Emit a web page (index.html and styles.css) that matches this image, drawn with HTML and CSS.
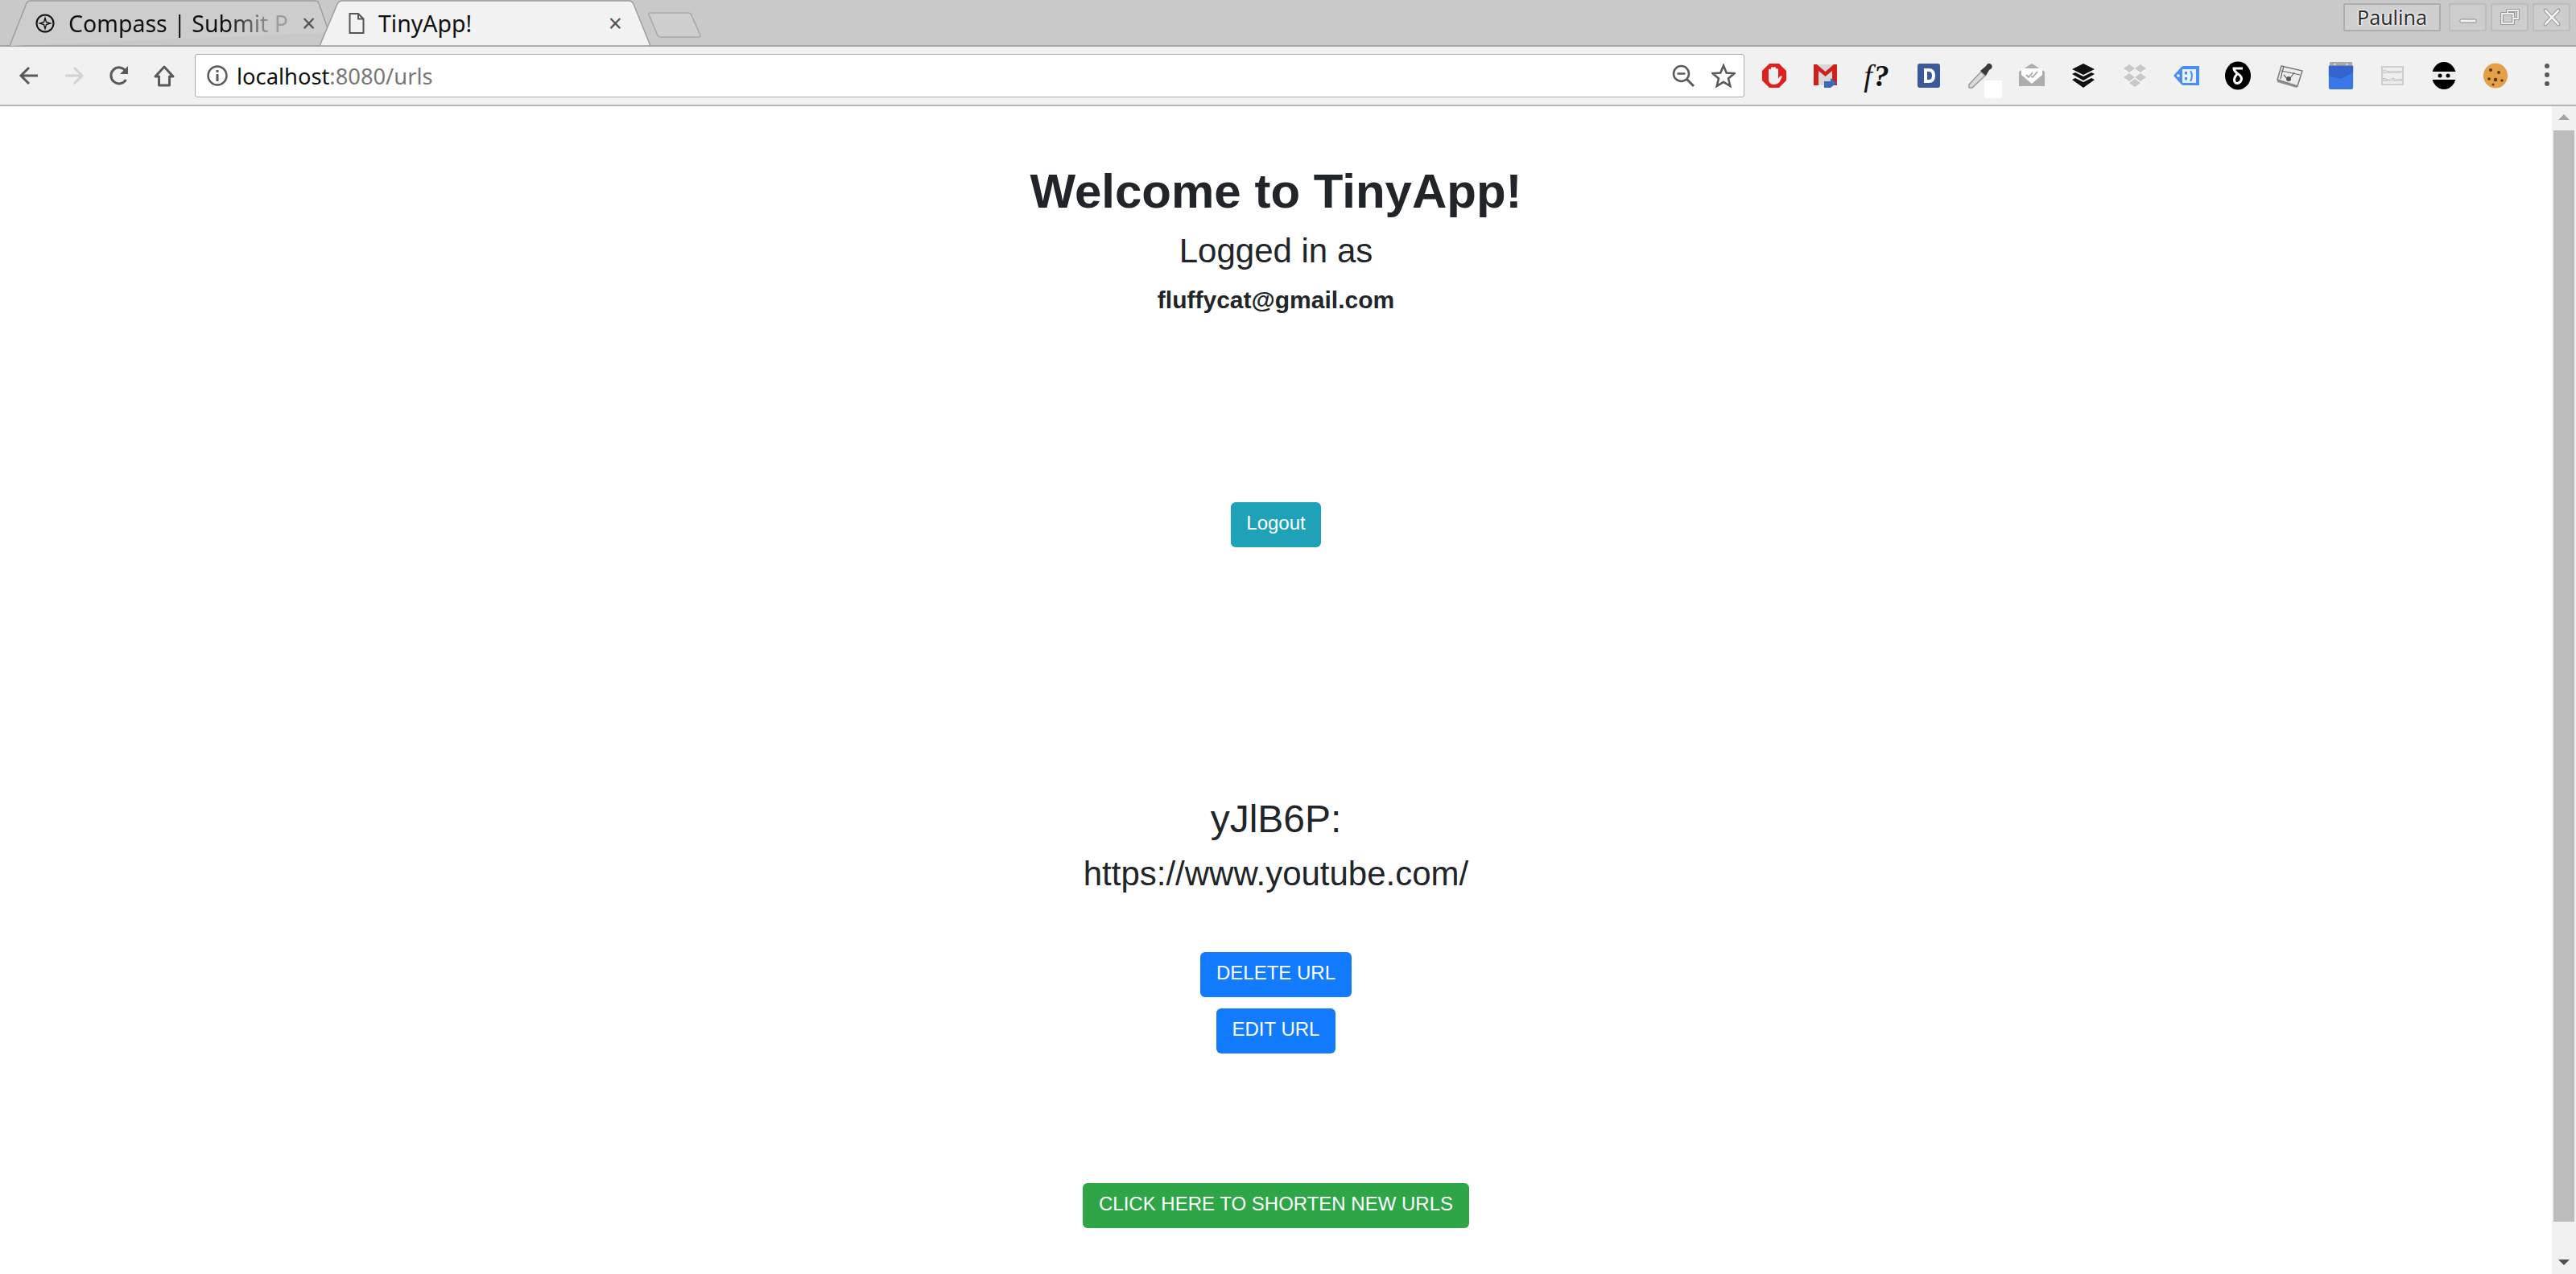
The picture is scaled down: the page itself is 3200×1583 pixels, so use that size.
FILE: index.html
```html
<!DOCTYPE html>
<html lang="en">
<head>
<meta charset="UTF-8">
<title>TinyApp!</title>
<link rel="stylesheet" href="styles.css">
</head>
<body>
<div class="tabstrip">
  <div class="tab">
    <svg class="tab-shape" viewBox="0 0 399 56" preserveAspectRatio="none"><path d="M1 56 L22 4 Q23 1 27 1 L380 1 Q384 1 385 4 L398 40" fill="#cdcdcd" stroke="#9e9e9e" stroke-width="1.5"/></svg>
    <svg class="tab-icon" viewBox="0 0 24 24"><circle cx="12" cy="12" r="10.5" fill="none" stroke="#111" stroke-width="2"/><path d="M12 5.500 L13.500 10.500 L18.500 12 L13.500 13.500 L12 18.500 L10.500 13.500 L5.500 12 L10.500 10.500 Z" fill="none" stroke="#111" stroke-width="1.400"/></svg>
    <span class="tab-title tab-title-fade">Compass | Submit P</span>
    <span class="tab-close">×</span>
  </div>
  <div class="tab tab-active">
    <svg class="tab-shape" viewBox="0 0 412 57" preserveAspectRatio="none"><path d="M0 57 L22 5 Q24 1 28 1 L384 1 Q388 1 390 5 L411 57 Z" fill="#f2f2f2" stroke="#9e9e9e" stroke-width="1.5"/></svg>
    <svg class="tab-icon" viewBox="0 0 20 26"><path d="M1.500 1 H12 L18.500 7.500 V25 H1.500 Z M12 1 V7.500 H18.500" fill="none" stroke="#555" stroke-width="2"/></svg>
    <span class="tab-title">TinyApp!</span>
    <span class="tab-close">×</span>
  </div>
  <svg class="new-tab" viewBox="0 0 68 34"><path d="M2 2 H50 Q53 2 54 5 L65 30 Q66 32 63 32 H15 Q13 32 12 30 L1 4 Q1 2 2 2 Z" fill="#cfcfcf" stroke="#a8a8a8" stroke-width="1.5"/></svg>
  <div class="window-controls">
    <div class="profile">Paulina</div>
    <div class="win-btn"><svg viewBox="0 0 24 24" width="24" height="24"><rect x="2" y="14" width="20" height="4" rx="1.500" fill="#f2f2f2" stroke="#8a8a8a" stroke-width="1"/></svg></div>
    <div class="win-btn"><svg viewBox="0 0 24 24" width="24" height="24"><path d="M9 6 V3 H22 V13 H17 M2 7 H16 V19 H2 Z" fill="none" stroke="#8a8a8a" stroke-width="3.600"/><path d="M9 6 V3 H22 V13 H17 M2 7 H16 V19 H2 Z" fill="none" stroke="#f0f0f0" stroke-width="1.800"/></svg></div>
    <div class="win-btn"><svg viewBox="0 0 24 24" width="24" height="24"><path d="M4 3 L20 20 M20 3 L4 20" stroke="#8a8a8a" stroke-width="4.500" stroke-linecap="round"/><path d="M4 3 L20 20 M20 3 L4 20" stroke="#f4f4f4" stroke-width="2.800" stroke-linecap="round"/></svg></div>
  </div>
</div>

<div class="toolbar">
  <div class="nav-btn"><svg viewBox="0 0 28 28" width="28" height="28"><path d="M25 14 H5 M14 4 L4 14 L14 24" fill="none" stroke="#5a5a5a" stroke-width="3"/></svg></div>
  <div class="nav-btn"><svg viewBox="0 0 28 28" width="28" height="28"><path d="M3 14 H23 M14 4 L24 14 L14 24" fill="none" stroke="#d2d2d2" stroke-width="3"/></svg></div>
  <div class="nav-btn"><svg viewBox="0 0 28 28" width="28" height="28"><path d="M22.500 19 A10 10 0 1 1 22 8" fill="none" stroke="#5a5a5a" stroke-width="3"/><path d="M25 2 V12 H15 Z" fill="#5a5a5a"/></svg></div>
  <div class="nav-btn"><svg viewBox="0 0 28 28" width="28" height="28"><path d="M14 3 L25 15 H20.500 V26 H7.500 V15 H3 Z" fill="none" stroke="#5a5a5a" stroke-width="3" stroke-linejoin="round"/></svg></div>
  <div class="omnibox">
    <svg class="info-icon" viewBox="0 0 26 26" width="26" height="26"><circle cx="13" cy="13" r="11.500" fill="none" stroke="#5a5a5a" stroke-width="2.400"/><rect x="11.500" y="11" width="3" height="9" fill="#5a5a5a"/><rect x="11.500" y="6" width="3" height="3" fill="#5a5a5a"/></svg>
    <span class="url"><span class="url-host">localhost</span>:8080/urls</span>
    <svg class="box-icon" viewBox="0 0 28 28" width="28" height="28"><circle cx="11.500" cy="11.500" r="9.500" fill="none" stroke="#5a5a5a" stroke-width="2.500"/><path d="M6.500 11.500 H16.500" stroke="#5a5a5a" stroke-width="2.500"/><path d="M18 18 L27 27" stroke="#5a5a5a" stroke-width="3"/></svg>
    <svg class="box-icon" viewBox="0 0 30 30" width="30" height="30"><path d="M15 2.500 L18.700 11.500 L28.500 12.200 L21 18.500 L23.300 28 L15 22.900 L6.700 28 L9 18.500 L1.500 12.200 L11.300 11.500 Z" fill="none" stroke="#5a5a5a" stroke-width="2.600"/></svg>
  </div>
  <div class="extensions">
    <div class="ext"><svg viewBox="0 0 32 32" width="32" height="32"><path d="M10 1 H22 L31 10 V22 L22 31 H10 L1 22 V10 Z" fill="#e0201c"/><path d="M9 14 V9 Q9 7.500 10.500 7.500 Q12 7.500 12 9 V7 Q12 5 13.500 5 Q15 5 15 7 V6.500 Q15 5 16.500 5 Q18 5 18 6.500 V8 Q18 7 19.500 7 Q21 7 21 9 V20 L23 17 Q24.500 15.500 26 17 L22.500 24 Q20 27 15 27 Q9 27 9 20 Z" fill="#f0f0f0"/></svg></div>
    <div class="ext"><svg viewBox="0 0 32 32" width="32" height="32"><rect x="1" y="2" width="29" height="26" fill="#d8d8d8"/><path d="M1 2 H5 L15.500 11 L26 2 H30 V28 H24 V10 L15.500 17 L7 10 V28 H1 Z" fill="#d0201c"/><path d="M14 23 H22 V19 L30 25 L22 31 H14 Z" fill="#3d6ab5"/></svg></div>
    <div class="ext"><span class="ext-fx">f<b>?</b></span></div>
    <div class="ext"><svg viewBox="0 0 30 32" width="30" height="32"><rect x="1" y="1" width="28" height="30" rx="3" fill="#3c5a9a"/><path d="M9 7 H15 Q23 7 23 16 Q23 25 15 25 H9 Z M13 11 V21 H15 Q19 21 19 16 Q19 11 15 11 Z" fill="#fff" fill-rule="evenodd"/></svg></div>
    <div class="ext ext-dropper"><svg viewBox="0 0 32 32" width="32" height="32"><path d="M2 27 L17 11 L22 16 L6 31 L2 31 Z" fill="#d9d9d9" stroke="#9a9a9a" stroke-width="1.500"/><path d="M16 10 L23 4 Q25 0 28 1 Q32 3 30 7 L27 9 L23 16 Z" fill="#3a3a3a"/></svg></div>
    <div class="ext"><svg viewBox="0 0 32 32" width="32" height="32"><path d="M0 11 L16 1 L32 11 V29 H0 Z" fill="#adadad"/><path d="M3 7 H29 V15 L16 26 L3 15 Z" fill="#fff"/><path d="M9 15 L12 18 L17 12 M15 17 L17 18 L23 11" fill="none" stroke="#a8a8a8" stroke-width="1.800"/></svg></div>
    <div class="ext"><svg viewBox="0 0 30 32" width="30" height="32"><path d="M15 1 L29 8 L15 15 L1 8 Z" fill="#111"/><path d="M1 14 L5 12 L15 17 L25 12 L29 14 L15 22 Z" fill="#111"/><path d="M1 21 L5 19 L15 24 L25 19 L29 21 L15 31 Z" fill="#111"/></svg></div>
    <div class="ext"><svg viewBox="0 0 30 30" width="30" height="30" fill="#c8c8c8"><path d="M8 1 L15 6 L8 11 L1 6 Z M22 1 L29 6 L22 11 L15 6 Z M8 12 L15 17 L8 22 L1 17 Z M22 12 L29 17 L22 22 L15 17 Z M15 19 L22 24 L15 29 L8 24 Z"/></svg></div>
    <div class="ext"><svg viewBox="0 0 34 30" width="34" height="30"><path d="M1 15 L10 5 Q11 3 14 3 H33 V27 H14 Q11 27 10 25 Z" fill="#4a8ff0"/><rect x="12" y="7" width="17" height="17" fill="#e9f1ff"/><rect x="15" y="10" width="3" height="3.500" fill="#4a8ff0"/><rect x="15" y="17" width="3" height="3.500" fill="#4a8ff0"/><path d="M22 9 Q26 15 22 22" fill="none" stroke="#4a8ff0" stroke-width="2"/><circle cx="7" cy="15" r="1.800" fill="#fff"/></svg></div>
    <div class="ext"><svg viewBox="0 0 32 36" width="32" height="36"><ellipse cx="16" cy="18" rx="16" ry="17.500" fill="#000"/><path d="M22 9 H11 Q11 12 15 15 Q22 19 20 24 Q17 29 13 27 Q9 23 15 16" fill="none" stroke="#fff" stroke-width="3"/></svg></div>
    <div class="ext"><svg viewBox="0 0 34 30" width="34" height="30"><path d="M7 3 L33 9 L27 28 L2 20 Z" fill="#ededed" stroke="#7a7a7a" stroke-width="1.500"/><path d="M2 20 L27 28 L26 30 L2 23 Z" fill="#8a8a8a"/><path d="M7 9 L30 14 M10 3 L6 19 M16 21 L23 11 M16 21 L10 14" fill="none" stroke="#666" stroke-width="1.200"/><circle cx="16" cy="19" r="3" fill="#555"/></svg></div>
    <div class="ext"><svg viewBox="0 0 32 36" width="32" height="34"><rect x="1" y="0" width="30" height="6" fill="#a9a9a9"/><path d="M0 5 H32 V34 Q32 36 30 36 H2 Q0 36 0 34 Z" fill="#3a78e8"/><path d="M0 5 H32 V14 L16 22 L0 19 Z" fill="#3464cc"/><circle cx="8" cy="3" r="1.200" fill="#eee"/><circle cx="24" cy="3" r="1.200" fill="#eee"/></svg></div>
    <div class="ext"><div class="ext-devtools"><span>Discover</span><span>DevTools</span></div></div>
    <div class="ext"><svg viewBox="0 0 30 34" width="30" height="34"><ellipse cx="15" cy="17" rx="15" ry="17" fill="#000"/><rect x="0" y="12" width="30" height="10" fill="#eee"/><circle cx="10" cy="17" r="2.500" fill="#000"/><circle cx="20" cy="17" r="2.500" fill="#000"/></svg></div>
    <div class="ext"><svg viewBox="0 0 30 32" width="30" height="32"><ellipse cx="15" cy="16" rx="15" ry="15.500" fill="#e3a044"/><circle cx="9" cy="9" r="2" fill="#5a3213"/><circle cx="19" cy="12" r="2" fill="#5a3213"/><circle cx="7" cy="20" r="1.800" fill="#5a3213"/><circle cx="15" cy="21" r="2.200" fill="#5a3213"/><circle cx="23" cy="22" r="1.800" fill="#5a3213"/><circle cx="12" cy="27" r="1.500" fill="#5a3213"/></svg></div>
    <div class="ext"><svg viewBox="0 0 8 32" width="8" height="32" fill="#5a5a5a"><circle cx="4" cy="4" r="3"/><circle cx="4" cy="15" r="3"/><circle cx="4" cy="26" r="3"/></svg></div>
  </div>
</div>

<div class="viewport">
  <main class="page">
    <h1>Welcome to TinyApp!</h1>
    <h3>Logged in as</h3>
    <h5>fluffycat@gmail.com</h5>
    <button class="btn btn-info btn-logout">Logout</button>
    <h2>yJlB6P:</h2>
    <h4>https://www.youtube.com/</h4>
    <button class="btn btn-primary btn-delete">DELETE URL</button>
    <button class="btn btn-primary btn-edit">EDIT URL</button>
    <button class="btn btn-success btn-new">CLICK HERE TO SHORTEN NEW URLS</button>
  </main>
  <div class="scrollbar">
    <div class="arrow-up"></div>
    <div class="thumb"></div>
    <div class="arrow-down"></div>
  </div>
</div>
</body>
</html>
```

FILE: styles.css
```css
*{box-sizing:border-box;}
html,body{height:100%;}
body{margin:0;background:#fff;overflow:hidden;font-family:"Liberation Sans",Arial,sans-serif;color:#212529;display:flex;flex-direction:column;}

/* window top */
.tabstrip{height:58px;background:#c9c9c9;border-bottom:2px solid #a3a3a3;display:flex;align-items:flex-start;padding-left:11px;font-family:"Noto Sans",sans-serif;flex:none;}
.tab{position:relative;width:399px;height:57px;display:flex;align-items:center;padding:0 26px 0 33px;gap:17px;}
.tab-active{width:412px;margin-left:-13px;padding:0 36px 0 36px;}
.tab-shape{position:absolute;left:0;top:0;width:100%;height:100%;z-index:0;}
.tab-icon,.tab-title,.tab-close{position:relative;z-index:1;}
.tab-icon{width:24px;height:24px;flex:none;}
.tab-active .tab-icon{width:20px;height:26px;}
.tab-title{font-size:28.5px;color:#111;white-space:nowrap;}
.tab-title-fade{-webkit-mask-image:linear-gradient(to right,#000 72%,rgba(0,0,0,.25) 92%);mask-image:linear-gradient(to right,#000 72%,rgba(0,0,0,.25) 92%);}
.tab-close{font-size:30px;color:#555;line-height:1;flex:none;margin-left:auto;}
.new-tab{width:68px;height:34px;margin:14px 0 0 -4px;flex:none;}
.window-controls{margin-left:auto;display:flex;gap:5px;padding:4px 7px 0 0;}
.profile{width:121px;height:35px;margin-right:5px;border:2px solid #adadad;border-radius:2px;background:#cfcfcf;font-size:25px;line-height:30px;text-align:center;color:#2e2e2e;text-shadow:0 0 2px #fff,0 0 3px #fff,0 0 3px #fff;}
.win-btn{width:47px;height:35px;border:2px solid #bcbcbc;border-radius:3px;background:#cdcdcd;display:flex;align-items:center;justify-content:center;}

/* toolbar */
.toolbar{height:74px;background:#f1f1f1;border-bottom:2px solid #b4b4b4;display:flex;align-items:center;flex:none;padding-left:8px;}
.nav-btn{width:56px;height:40px;display:flex;align-items:center;justify-content:center;flex:none;}
.omnibox{width:1925px;height:54px;margin-left:10px;background:#fff;border:1px solid #aaa;border-radius:3px;display:flex;align-items:center;padding:0 10px 0 14px;flex:none;}
.info-icon{flex:none;}
.url{flex:1;margin-left:11px;font:27.3px "Noto Sans",sans-serif;color:#777;}
.url-host{color:#111;}
.box-icon{flex:none;margin-left:21px;}
.extensions{display:flex;margin-left:5px;}
.ext{width:64px;height:40px;display:flex;align-items:center;justify-content:center;}
.ext-fx{font:italic 38px "Liberation Serif",serif;color:#111;letter-spacing:2px;}
.ext-dropper{position:relative;}
.ext-dropper::after{content:"";position:absolute;left:37px;top:26px;width:22px;height:22px;background:#fff;border-radius:2px;}
.ext-devtools{width:28px;height:24px;border:2px solid #cfcfcf;background:#eee;display:flex;flex-direction:column;font-size:6px;color:#aaa;text-align:center;line-height:10px;white-space:nowrap;overflow:hidden;}

/* page */
.viewport{flex:1;display:flex;min-height:0;}
.page{flex:1;display:flex;flex-direction:column;align-items:center;padding-top:70px;text-align:center;}
h1,h2,h3,h4,h5{margin:0;font-weight:500;line-height:1.2;}
h1{font-size:60px;font-weight:700;}
h3{font-size:42px;margin-top:13px;}
h5{font-size:30px;font-weight:700;margin-top:18px;}
h2{font-size:48px;margin-top:0;}
h4{font-size:42px;margin-top:14px;}
.btn{display:block;font:400 24px/36px "Liberation Sans",Arial,sans-serif;color:#fff;padding:7px 19px 11px;border:1.500px solid transparent;border-radius:6px;}
.btn-info{background:#1fa2b8;}
.btn-primary{background:#137bff;}
.btn-success{background:#2ea648;}
.btn-logout{margin:233px 0 309px;padding-left:18px;padding-right:18px;}
.btn-delete{margin-top:72px;}
.btn-edit{margin-top:14px;}
.btn-new{margin-top:161px;}

.scrollbar{width:30px;flex:none;background:#f1f1f1;display:flex;flex-direction:column;align-items:center;padding:0 2px;}
.arrow-up{margin-top:10px;border:7px solid transparent;border-top:0;border-bottom-color:#a3a3a3;width:0;}
.thumb{flex:1;width:26px;background:#bcbcbc;margin:13px 0 47px;}
.arrow-down{margin-bottom:11px;border:7px solid transparent;border-bottom:0;border-top-color:#505050;width:0;}
```
